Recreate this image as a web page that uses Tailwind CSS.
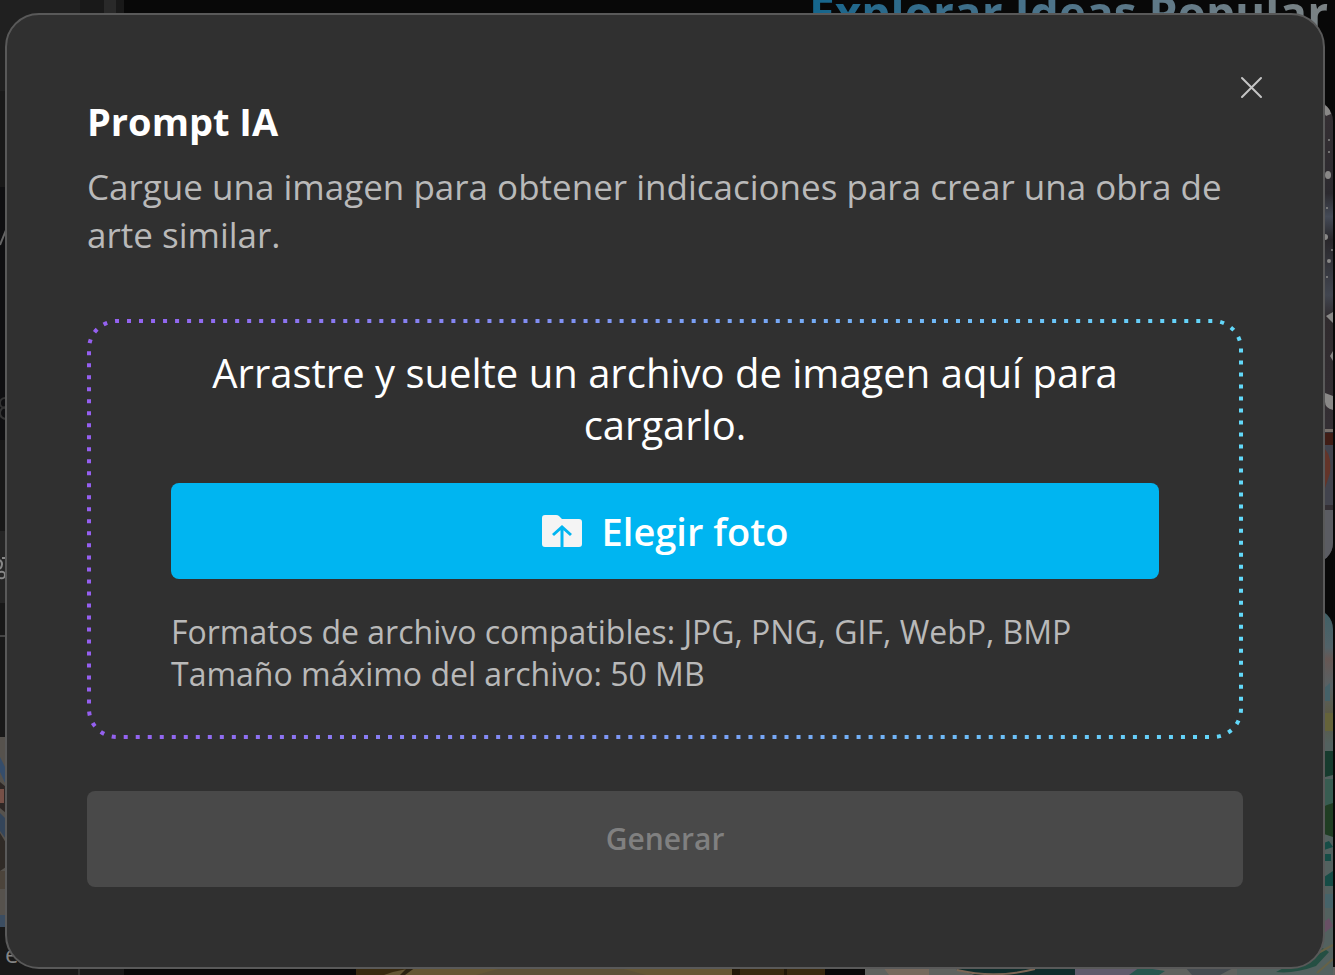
<!DOCTYPE html>
<html lang="es">
<head>
<meta charset="utf-8">
<meta name="viewport" content="width=device-width, initial-scale=1">
<title>Prompt IA</title>
<script src="https://cdn.jsdelivr.net/npm/@tailwindcss/browser@4"></script>
</head>
<body class="relative min-h-screen overflow-hidden bg-[#080808] font-['Open_Sans',sans-serif]">
<!-- Dimmed page behind the dialog -->
<div class="absolute inset-0 flex overflow-hidden" aria-hidden="true">
  <div class="flex w-20 shrink-0 flex-col bg-[#191919]">
    <div class="h-[91px] shrink-0 bg-[#202020]"></div>
    <div class="h-24 shrink-0 bg-[#191919]"></div>
    <div class="h-[253px] shrink-0 bg-[#0f0f11]">
      <svg class="h-full w-[6px]" viewBox="0 0 6 253" fill="none"><path d="M0 58L6 43" stroke="#666" stroke-width="2"/><circle cx="5" cy="216" r="5" stroke="#333" stroke-width="2"/><circle cx="6" cy="226" r="6" stroke="#333" stroke-width="2"/></svg>
    </div>
    <div class="h-[91px] shrink-0 bg-[#181818]"></div>
    <div class="h-[72px] shrink-0 bg-[#252525]">
      <svg class="h-full w-[6px]" viewBox="0 0 6 72" fill="none" stroke="#888" stroke-width="2"><path d="M6 27H2M0 29q4 4 0 9M0 41q5-1 5 3t-5 3"/></svg>
    </div>
    <div class="h-[34px] shrink-0 border-b-2 border-[#444] bg-[#181818]"></div>
    <div class="h-[100px] shrink-0"></div>
    <svg class="h-[190px] w-20 shrink-0" viewBox="0 0 80 190">
      <rect width="80" height="190" fill="#56524d"/><path d="M0 20L6 32v16L0 35z" fill="#354d6b"/><path d="M0 45l6 5v26l-6-5z" fill="#2e2725"/><path d="M0 52h4v14H0z" fill="#775047"/><path d="M0 76l6 6v20l-6-8z" fill="#34455a"/><path d="M0 96l6 10v24l-6 4z" fill="#302b27"/><path d="M0 134h6v18H0z" fill="#4c443b"/><path d="M0 178h6v12H0z" fill="#3b4d61"/>
    </svg>
    <p class="grow border-r-2 border-[#303030] px-[5px] text-2xl leading-[54px] text-[#858585]">e</p>
  </div>
  <div class="flex w-11 shrink-0 bg-[#191919]"><div class="ml-6 max-h-5 w-3 bg-[#292929]"></div></div>
  <div class="relative flex grow items-end overflow-hidden">
    <h1 class="absolute -top-2 left-[685px] bg-linear-to-r from-[#12658c] to-[#7b8284] bg-clip-text text-[46px] leading-10 font-bold whitespace-nowrap text-transparent">Explorar Ideas Popular</h1>
    <svg class="ml-[232px] h-2 w-[469px] shrink-0" viewBox="0 0 469 8" preserveAspectRatio="none">
      <rect width="469" height="8" fill="#38290f"/><path d="M28 8Q50 0 76 0H376V8z" fill="#655634"/><path d="M52 0l-8 8h5l11-8z" fill="#2b2110"/><path d="M120 8L150 0H260L290 8z" fill="#5d5036"/><path d="M376 0h8v8h-8zM428 0h3v8h-3z" fill="#211707"/>
    </svg>
    <svg class="ml-10 h-2 min-w-0 grow" viewBox="0 0 470 8" preserveAspectRatio="none">
      <rect width="470" height="8" fill="#60625f"/><path d="M18 0h46v8H24z" fill="#77695d"/><path d="M85 0H210V8H110z" fill="#102c2b"/><path d="M92 3Q130 12 170 2" stroke="#7d6655" stroke-width="2" fill="none"/><path d="M210 0h90l-25 8h-65z" fill="#605b6c"/><path d="M275 0l25 4-6 4h-30z" fill="#27564e"/><path d="M320 0h50l-15 8h-28z" fill="#454b50"/><path d="M390 0h60l-30 8h-40z" fill="#1e4c43"/>
    </svg>
  </div>
  <div class="absolute inset-y-0 right-[2px] flex w-24 flex-col gap-[46px] pt-[101px]">
    <svg class="h-[462px] w-24 shrink-0 rounded-[20px]" viewBox="0 0 96 462">
      <defs><linearGradient id="snow" x2="0" y2="1"><stop stop-color="#363034"/><stop offset=".2" stop-color="#2c2a2f"/><stop offset=".25" stop-color="#454b57"/><stop offset=".3" stop-color="#29272b"/><stop offset=".42" stop-color="#424650"/><stop offset=".47" stop-color="#302b2e"/><stop offset=".7" stop-color="#342f34"/></linearGradient></defs>
      <rect width="96" height="462" fill="url(#snow)"/>
      <g fill="#898887"><path d="M84 0q8 2 10 13l-5 2-5-8z"/><circle cx="92" cy="39" r="1"/><circle cx="92" cy="51" r="1"/><ellipse cx="91" cy="74" rx="3" ry="4"/><circle cx="90" cy="107" r="1"/><circle cx="88" cy="136" r="3"/><circle cx="95" cy="149" r="1"/><circle cx="92" cy="160" r="2"/><circle cx="90" cy="176" r="1"/><path d="M89 215l7-4v11zM88 292l8 3v14q-8-2-8-8zM96 250l-3 5 3 5z"/></g>
      <path d="M84 328h12v3H84z" fill="#78706b"/><path d="M84 332h12v12H84z" fill="#401d16"/><path d="M84 344h12v60H84z" fill="#42434d"/><path d="M88 348q7 8 5 24l-5 15z" fill="#633429"/><path d="M0 409h96v53H0z" fill="#5b5c62"/>
    </svg>
    <svg class="h-96 w-24 shrink-0 rounded-t-[20px]" viewBox="0 0 96 384">
      <defs><linearGradient id="pond" x2="0" y2="1"><stop stop-color="#3f6066"/><stop offset=".1" stop-color="#526268"/><stop offset=".13" stop-color="#665754"/><stop offset=".2" stop-color="#586164"/><stop offset=".28" stop-color="#5c5943"/><stop offset=".35" stop-color="#53615f"/></linearGradient></defs>
      <rect width="96" height="384" fill="url(#pond)"/>
      <path d="M84 82l9-8v18h-9z" fill="#456168"/><path d="M86 104h10v18H86z" fill="#65633a"/>
      <path d="M84 142h12v24l-12 3z" fill="#173b2e"/><path d="M84 170h12v26H84z" fill="#385c51"/><path d="M84 198l12-4v34l-12-4z" fill="#203d23"/><path d="M84 235l8-3 4 6-12 4zM87 245h7v7h-7zM84 270l12-8v15H84z" fill="#164c46"/><path d="M84 285h12v14H84z" fill="#466369"/><path d="M84 315l8-6 4 8-10 8z" fill="#685065"/><path d="M58 353q20-22 34-10l-13 14q-22 8-40 6z" fill="#254f43"/><path d="M70 350l26-14M96 350l-16 14" stroke="#676246" stroke-width="2"/>
    </svg>
  </div>
</div>

<main role="dialog" aria-modal="true" aria-labelledby="title" class="relative mt-[13px] mr-[10px] mb-[6px] ml-[5px] rounded-[34px] border-2 border-[#595959] bg-[#303030] px-20 py-20">
  <button type="button" aria-label="Cerrar" class="absolute top-[53px] right-[51px] grid size-10 place-items-center text-[#c5c5c5]">
    <svg class="size-6" viewBox="0 0 24 24" fill="none" stroke="currentColor" stroke-width="2" stroke-linecap="round"><path d="M2 2l19 19M21 2L2 21"/></svg>
  </button>
  <h2 id="title" class="text-[38px] leading-[52px] font-bold text-white">Prompt IA</h2>
  <p class="mt-4 text-[35px] leading-[48px] text-[#b9b9b9]">Cargue una imagen para obtener indicaciones para crear una obra de arte similar.</p>

  <section class="relative mt-[60px] px-[84px] pt-7 pb-11">
    <svg class="pointer-events-none absolute inset-0 size-full overflow-visible" fill="none" aria-hidden="true">
      <defs><linearGradient id="edge"><stop stop-color="#955ff0"/><stop offset="1" stop-color="#62d9fa"/></linearGradient></defs>
      <rect x="2" y="2" rx="28" pathLength="3084" class="h-[calc(100%-4px)] w-[calc(100%-4px)]" stroke="url(#edge)" stroke-width="4" stroke-dasharray="4 8" stroke-dashoffset="2"/>
    </svg>
    <p class="text-center text-[40px] leading-[52px] text-white">Arrastre y suelte un archivo de imagen aquí para cargarlo.</p>
    <button type="button" class="mt-8 flex h-24 w-full items-center justify-center gap-5 rounded-lg bg-[#00b5f1] text-[38px] leading-[52px] font-semibold text-white">
      <svg class="h-8 w-10" viewBox="0 0 40 32" aria-hidden="true"><path fill="#f4f4f4" d="M3 0H14Q16 0 17 1L20 4H37Q40 4 40 7V29Q40 32 37 32H3Q0 32 0 29V3Q0 0 3 0Z"/><path d="M20 32V13M11 20l9-8 9 8" fill="none" stroke="#00b5f1" stroke-width="3"/></svg>
      Elegir foto
    </button>
    <p class="mt-8 text-[32px] leading-[42px] text-[#b9b9b9]">Formatos de archivo compatibles: JPG, PNG, GIF, WebP, BMP<br>Tamaño máximo del archivo: 50 MB</p>
  </section>
  <button type="button" disabled class="mt-[52px] h-24 w-full rounded-lg bg-[#494949] text-[30px] leading-[42px] font-semibold text-[#808080]">Generar</button>
</main>
</body>
</html>
